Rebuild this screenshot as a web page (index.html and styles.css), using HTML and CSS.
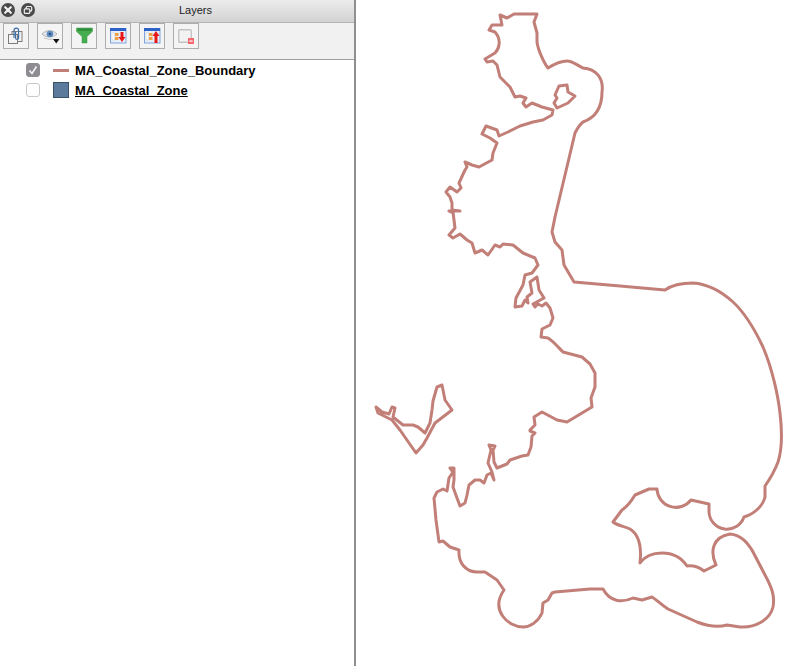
FILE: index.html
```html
<!DOCTYPE html>
<html lang="en">
<head>
    <meta charset="UTF-8">
    <meta name="viewport" content="width=device-width, initial-scale=1.0">
    <title>Layers</title>
    <link rel="stylesheet" href="styles.css">
</head>
<body>
    <aside class="panel">
        <header class="titlebar">
            <span class="win-btn">
                <svg width="14" height="14" viewBox="0 0 14 14"><path d="M4.2 4.2l5.6 5.6M9.8 4.2l-5.6 5.6" stroke="#f2f2f2" stroke-width="2.2" stroke-linecap="round"/></svg>
            </span>
            <span class="win-btn">
                <svg width="14" height="14" viewBox="0 0 14 14"><rect x="5.2" y="3.5" width="5.5" height="4.6" rx="1" fill="none" stroke="#f2f2f2" stroke-width="1.2"/><rect x="3.3" y="5.8" width="5.5" height="4.6" rx="1" fill="#4a4a4a" stroke="#f2f2f2" stroke-width="1.2"/></svg>
            </span>
            <h1 class="title">Layers</h1>
        </header>
        <div class="toolbar">
            <button class="tool">
                <svg width="24" height="24" viewBox="0 0 24 24"><rect x="8" y="7.500" width="10" height="10" fill="#f4f4f4" stroke="#7d7d7d"/><rect x="4.500" y="10.500" width="9" height="9" fill="#f4f4f4" stroke="#7d7d7d"/><path d="M10 14V6.500a2.300 2.300 0 0 1 4.600 0V14a1.500 1.500 0 0 1-3 0V8" fill="none" stroke="#3f6fa8" stroke-width="1.200"/></svg>
            </button>
            <button class="tool">
                <svg width="24" height="24" viewBox="0 0 24 24"><path d="M4 10c4-4.500 11-4.500 15 0c-4 4-11 4-15 0z" fill="#dfe4ea" stroke="#b5b5b5"/><circle cx="12" cy="10" r="3.300" fill="#5f8fc4"/><circle cx="12" cy="10" r="1.300" fill="#2d4f80"/><path d="M6 14l6 1.500 3-.5" fill="none" stroke="#c4c4c4"/><path d="M15 15h6.500l-3.250 4.500z" fill="#111"/></svg>
            </button>
            <button class="tool">
                <svg width="24" height="24" viewBox="0 0 24 24"><path d="M4.500 4h16v3.500l-5.500 5V19h-5v-6.500l-5.500-5z" fill="#46ad4e" stroke="#3a9444" stroke-width=".5"/><path d="M5.500 4.500h14v2.500h-14z" fill="#2f8f3c"/></svg>
            </button>
            <button class="tool">
                <svg width="24" height="24" viewBox="0 0 24 24"><rect x="4.500" y="4.500" width="15.500" height="14.500" fill="#e8eef8" stroke="#7fa3dc"/><rect x="4" y="4" width="16" height="3" fill="#2e62c8"/><rect x="6" y="9" width="2.500" height="7" fill="#fff" stroke="#c9c9c9" stroke-width=".5"/><rect x="9" y="9" width="3.500" height="3" fill="#f0a040"/><rect x="9" y="13" width="3.500" height="3" fill="#f0a040"/><path d="M14.500 8v5h-2l3.500 5 3.500-5h-2V8z" fill="#e81818"/></svg>
            </button>
            <button class="tool">
                <svg width="24" height="24" viewBox="0 0 24 24"><rect x="4.500" y="4.500" width="15.500" height="14.500" fill="#e8eef8" stroke="#7fa3dc"/><rect x="4" y="4" width="16" height="3" fill="#2e62c8"/><rect x="6" y="9" width="2.500" height="7" fill="#fff" stroke="#c9c9c9" stroke-width=".5"/><rect x="9" y="9" width="3.500" height="3" fill="#f0a040"/><rect x="9" y="13" width="3.500" height="3" fill="#f0a040"/><path d="M14.500 19v-7h-2l3.500-5 3.500 5h-2v7z" fill="#e81818"/></svg>
            </button>
            <button class="tool">
                <svg width="24" height="24" viewBox="0 0 24 24"><rect x="4.700" y="5.700" width="12.600" height="12.600" rx="1" fill="#f2f2f2" stroke="#c4c4c4" stroke-width="1.400"/><rect x="14" y="14" width="6" height="6" fill="#f2686e"/><rect x="15.300" y="16.500" width="3.400" height="1.200" fill="#fff"/></svg>
            </button>
        </div>
        <ul class="layers">
            <li class="layer">
                <span class="check is-on">
                    <svg width="14" height="14" viewBox="0 0 14 14"><path d="M3.500 7.500l2.500 3 4.500-7" fill="none" stroke="#f4f4f4" stroke-width="1.600"/></svg>
                </span>
                <span class="swatch"><span class="swatch-line"></span></span>
                <span class="layer-name">MA_Coastal_Zone_Boundary</span>
            </li>
            <li class="layer">
                <span class="check"></span>
                <span class="swatch swatch-fill"></span>
                <span class="layer-name is-current">MA_Coastal_Zone</span>
            </li>
        </ul>
    </aside>
    <main class="map">
        <svg class="map-svg" width="455" height="666" viewBox="356 0 455 666">
            <path class="boundary" d="M537 14L534 22L537 33L537 42C538 50 544 63 548 68C556 63 562 61 567 61C573 61 578 66 583 68C596 69 604 78 602 92C602 105 597 117 583 122C579 125 577 129 575 133L555 217L552 232L555 242L562 250L564 265L574 282L620 286L665 290C672 285 682 283 693 283C708 284 722 292 733 302C745 313 755 330 763 347C772 368 778 395 780 413C782 430 782 450 778 462C775 470 772 476 765 486L765 497C763 506 754 514 744 517A18 18 0 0 1 709 512L709 504L691 500A19 19 0 0 1 657 489L649 489L635 495C632 500 628 506 622 510L613 522C618 526 624 526 630 529C638 534 642 545 640 563C645 556 652 553 662 553C672 553 681 557 687 566C695 565 700 568 704 571L716 565C710 552 712 537 730 534C742 535 748 544 752 550L765 575C772 588 775 596 773 607C770 620 755 628 740 627L727 625C720 627 710 627 697 622L668 609C660 604 657 600 652 597L642 600L633 598C622 603 610 602 603 589L590 589L555 592L552 593L548 600L543 603L542 613C538 622 530 627 523 627C508 627 490 610 504 590L497 580L485 572L477 572C468 572 458 565 459 550L450 547L443 541L439 542L436 520L434 498L437 492L443 489L447 491L449 478L453 472L450 468L454 468L454 480L453 487L457 498L460 506L465 503L467 495L469 485L475 480L480 480L484 483L487 475L491 473L494 480L492 472L488 463L491 450L489 445L495 446L493 450L494 462L497 468L507 464L510 460L522 456L528 455L531 447L532 436L535 433L530 431L530 430L535 425L534 417L542 412L557 420L567 422L582 413L592 407L591 398L595 387L595 373L590 364L582 357L563 352C558 347 553 341 548 338L541 337L542 329L550 325L553 318L550 308L546 303L542 306L538 304L535 307L533 304L544 298L539 290L537 277L530 282L532 293L527 297L528 303L525 300L522 306L515 307L516 298L523 285L525 275L532 273L538 265L535 258L523 253L513 245L503 244L500 247L495 245L488 255L482 250L475 253L472 243L467 240L460 234L453 238L449 235L455 228L453 212L453 213L449 211L460 211L452 210L452 203L450 197L446 192L450 187L457 192L461 188L459 183L465 170L467 167L465 162L472 165L479 167L492 160L493 153L497 143L490 138L482 134L486 126L497 130L499 136L508 132L520 126L533 122L543 120L552 115L553 110L542 107L532 103L526 107L523 103L526 98L520 96L515 97L510 87L500 77L497 65L493 61L487 62L485 59L495 53C499 49 502 40 495 32L489 30L492 25L502 25L500 15L507 18L514 14Z"/>
            <path class="boundary" d="M555 95L559 86L567 85L568 92L575 96L568 103L557 108L554 103L557 98Z"/>
            <path class="boundary" d="M376 407L378 413L392 420L400 430L416 453L423 445L427 438L435 423L452 410L445 400L442 385L437 387L433 401L432 410L430 423L425 433L418 427L413 425L403 425L393 417L395 408L392 407L389 414L382 412Z"/>
        </svg>
    </main>
</body>
</html>
```

FILE: styles.css
```css
html, body {
    margin: 0;
    padding: 0;
    height: 100%;
    background-color: #fff;
}
body {
    display: flex;
    overflow: hidden;
    font-family: "Liberation Sans", Arial, sans-serif;
}
.panel {
    width: 354px;
    height: 666px;
    flex: none;
    border-right: 2px solid #8f8f8f;
    background-color: #fff;
}
.titlebar {
    display: flex;
    align-items: center;
    gap: 6px;
    height: 23px;
    padding: 0 0 3px 1px;
    box-sizing: border-box;
    background: linear-gradient(#ececec, #d2d2d2);
    border-bottom: 1px solid #b4b4b4;
}
.win-btn {
    display: flex;
    align-items: center;
    justify-content: center;
    width: 14px;
    height: 14px;
    border-radius: 50%;
    background-color: #4a4a4a;
}
.title {
    flex: 1;
    margin: 0;
    padding-right: 4px;
    text-align: center;
    font-size: 11px;
    line-height: 16px;
    font-weight: normal;
    color: #222;
}
.toolbar {
    display: flex;
    gap: 8px;
    height: 37px;
    padding-left: 3px;
    box-sizing: border-box;
    background-color: #f1f1f1;
    border-bottom: 1px solid #a0a0a0;
}
.tool {
    display: flex;
    align-items: center;
    justify-content: center;
    width: 26px;
    height: 26px;
    padding: 0;
    background-color: #f4f4f4;
    border: 1px solid #adadad;
}
.layers {
    list-style: none;
    margin: 0;
    padding: 0 0 0 26px;
}
.layer {
    display: flex;
    align-items: center;
    height: 20px;
}
.check {
    display: block;
    width: 12px;
    height: 12px;
    border: 1px solid #c8c8c8;
    border-radius: 3px;
    background-color: #fff;
    margin-right: 13px;
}
.check.is-on {
    background-color: #8e8c90;
    border-color: #8e8c90;
}
.check svg {
    display: block;
    margin: -1px;
}
.swatch {
    display: flex;
    align-items: center;
    width: 16px;
    height: 16px;
    margin-right: 6px;
}
.swatch-line {
    display: block;
    width: 16px;
    height: 3px;
    background-color: #c08078;
}
.swatch-fill {
    box-sizing: border-box;
    background-color: #5b7a9c;
    border: 1px solid #3b4f66;
}
.layer-name {
    font-size: 13px;
    font-weight: bold;
    color: #000;
}
.layer-name.is-current {
    text-decoration: underline;
}
.map {
    flex: 1;
    background-color: #fff;
}
.map-svg {
    display: block;
}
.boundary {
    fill: none;
    stroke: #c27f78;
    stroke-width: 3;
    stroke-linejoin: round;
    stroke-linecap: round;
}
```
